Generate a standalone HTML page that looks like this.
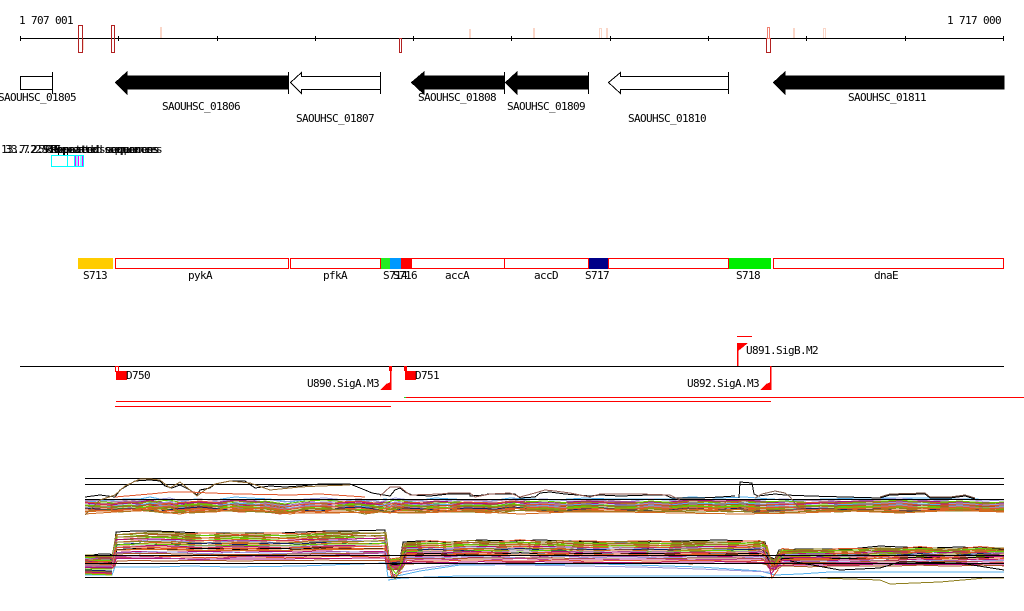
<!DOCTYPE html>
<html><head><meta charset="utf-8"><title>Genome browser</title>
<style>
html,body{margin:0;padding:0;background:#fff;width:1024px;height:611px;overflow:hidden}
svg{display:block}
text{font-family:"DejaVu Sans Mono","Liberation Mono",monospace;font-size:11px;letter-spacing:-.62px;fill:#000}
.p{fill:none;shape-rendering:crispEdges}
.c{shape-rendering:crispEdges}
</style></head><body>
<svg width="1024" height="611" viewBox="0 0 1024 611" xmlns="http://www.w3.org/2000/svg">
<defs>
<polyline id="u1" class="p" points="85,508 100,507 115,506 125,505 140,505 150,503 165,506 180,508 195,505 215,506 235,503 250,504 270,505 290,508 310,505 330,506 350,506 370,507 385,505 400,507 415,507 435,504 470,506 490,507 510,504 530,505 555,506 585,504 610,505 640,505 670,505 690,503 720,504 745,503 770,505 790,506 830,505 860,504 890,504 925,504 945,505 970,505 1004,506"/>
<polyline id="u2" class="p" points="85,506 105,505 120,507 135,506 150,505 170,503 190,508 210,507 230,505 245,507 265,504 285,507 305,504 325,503 345,505 365,509 380,507 395,503 410,505 430,507 455,505 480,506 500,508 520,505 545,504 570,506 600,506 625,507 650,504 680,506 705,505 730,507 760,505 785,504 815,506 840,507 870,505 900,503 930,506 960,504 985,506 1004,505"/>
<polyline id="u3" class="p" points="85,504 110,506 130,504 145,506 160,507 175,505 200,503 220,505 240,507 260,506 280,509 300,506 320,507 340,504 360,503 375,505 390,508 405,504 425,505 445,507 465,504 495,505 515,503 535,506 560,507 580,505 605,504 630,506 660,507 685,504 715,506 740,504 755,507 775,506 800,505 825,504 850,506 880,505 910,507 940,505 975,506 1004,507"/>
<polyline id="l1" class="p" vector-effect="non-scaling-stroke" points="85,-19 100,-21 110,-21 113,-19 116,-43 135,-44 155,-44 180,-43 200,-42 220,-42 240,-42 260,-42 280,-42 300,-43 330,-44 350,-44 385,-45 387,-20 392,-14 400,-15 403,-33 420,-34 450,-33 480,-35 510,-34 540,-35 570,-34 600,-33 640,-33 680,-34 720,-35 750,-34 765,-33 769,-18 775,-16 779,-25 800,-26 830,-26 850,-26 880,-29 900,-28 930,-27 960,-28 1004,-26"/>
<polyline id="l2" class="p" vector-effect="non-scaling-stroke" points="85,-18 100,-19 111,-20 114,-20 117,-41 140,-43 160,-41 180,-42 210,-43 240,-41 270,-43 300,-42 320,-44 350,-42 385,-43 388,-16 395,-17 402,-18 405,-32 430,-35 460,-33 490,-33 520,-36 550,-33 580,-35 610,-34 650,-35 690,-33 730,-34 760,-35 767,-30 771,-14 778,-18 782,-27 810,-24 840,-27 870,-27 890,-26 920,-29 950,-26 980,-29 1004,-27"/>
<polyline id="l3" class="p" vector-effect="non-scaling-stroke" points="85,-21 105,-20 112,-19 116,-42 130,-42 150,-45 175,-44 205,-41 235,-44 255,-43 285,-41 315,-43 345,-45 375,-43 386,-44 390,-12 398,-13 403,-20 407,-34 440,-33 470,-36 500,-34 530,-33 560,-36 590,-33 620,-35 660,-33 700,-35 740,-33 764,-35 768,-24 773,-12 780,-22 785,-26 820,-27 845,-25 875,-28 905,-26 935,-28 965,-26 990,-28 1004,-28"/>
</defs>

<!-- Ruler -->
<text x="19" y="24">1 707 001</text>
<text x="947" y="24">1 717 000</text>
<g stroke="#fad6c8" stroke-width="2" class="c" fill="none">
<path d="M161 27V38M83 38V50M470 29V38M534 28V38M794 28V38"/>
<rect x="599.5" y="28.5" width="2" height="10" stroke-width="1"/>
<path d="M607 28V38"/>
<rect x="823.5" y="28.5" width="2" height="10" stroke-width="1"/>
</g>
<path d="M20 38.5H1004M20.5 36V41M118.5 36V41M217.5 36V41M315.5 36V41M413.5 36V41M511.5 36V41M610.5 36V41M708.5 36V41M806.5 36V41M905.5 36V41M1003.5 36V41" stroke="#000" class="c" fill="none"/>
<g fill="none" stroke="#b22222" class="c">
<rect x="78.5" y="25.5" width="4" height="27"/>
<rect x="111.5" y="25.5" width="3" height="27"/>
<rect x="399.5" y="38.5" width="2" height="14"/>
<rect x="766.5" y="38.5" width="4" height="14"/>
<rect x="767.5" y="27.5" width="2" height="11" stroke="#f08070"/>
</g>

<!-- Genes -->
<g stroke="#000" stroke-width="1" class="c">
<path d="M52.500 72V94M52.500 76.500H20.500V89.500H52.500" fill="#fff"/>
<polygon points="115.500,82.500 127,72 127,76 288.500,76 288.500,89 127,89 127,94" fill="#000"/>
<path d="M288.500 72V94"/>
<polygon points="290.500,82.500 301.500,72.500 301.500,76.500 380.500,76.500 380.500,89.500 301.500,89.500 301.500,93.500" fill="#fff"/>
<path d="M380.500 72V94"/>
<polygon points="411.500,82.500 424,72 424,76 504.500,76 504.500,89 424,89 424,94" fill="#000"/>
<path d="M504.500 72V94"/>
<polygon points="505.500,82.500 517,72 517,76 588.500,76 588.500,89 517,89 517,94" fill="#000"/>
<path d="M588.500 72V94"/>
<polygon points="608.500,82.500 620.500,72.500 620.500,76.500 728.500,76.500 728.500,89.500 620.500,89.500 620.500,93.500" fill="#fff"/>
<path d="M728.500 72V94"/>
<polygon points="773.500,82.500 785,72 785,76 1004,76 1004,89 785,89 785,94" fill="#000"/>
</g>
<text x="-2" y="101">SAOUHSC_01805</text>
<text x="162" y="110">SAOUHSC_01806</text>
<text x="296" y="122">SAOUHSC_01807</text>
<text x="418" y="101">SAOUHSC_01808</text>
<text x="507" y="110">SAOUHSC_01809</text>
<text x="628" y="122">SAOUHSC_01810</text>
<text x="848" y="101">SAOUHSC_01811</text>

<!-- Repeats -->
<text x="51" y="153">Repeated sequences</text>
<text x="45" y="153">Repeated sequences</text>
<text x="38" y="153">5 Repeated sequences</text>
<text x="30" y="153">2.5 Repeated sequences</text>
<text x="1" y="153">13.7.2.9.5</text>
<text x="5" y="153">33.7 2 3</text>
<g class="c" fill="none" stroke="#00ffff">
<rect x="51.500" y="155.500" width="32" height="11"/>
<path d="M67.500 155V167M74.500 155V167M77 155V167M81 155V167"/>
<path d="M75.500 156V166M78.500 156V166M82.500 156V166" stroke="#ff00ff"/>
</g>

<!-- Segments -->
<g class="c">
<rect x="78" y="258" width="35" height="11" fill="#ffcc00"/>
<g fill="#fff" stroke="#ff0000">
<rect x="115.500" y="258.500" width="173" height="10"/>
<rect x="290.500" y="258.500" width="90" height="10"/>
<rect x="411.500" y="258.500" width="93" height="10"/>
<rect x="504.500" y="258.500" width="84" height="10"/>
<rect x="608.500" y="258.500" width="120" height="10"/>
<rect x="773.500" y="258.500" width="230" height="10"/>
</g>
<rect x="381" y="258" width="9" height="11" fill="#22ee22"/>
<rect x="390" y="258" width="11" height="11" fill="#0099ff"/>
<rect x="401" y="258" width="11" height="11" fill="#ff0000"/>
<rect x="589" y="258" width="19" height="11" fill="#000088"/>
<rect x="729" y="258" width="42" height="11" fill="#00ee00"/>
</g>
<text x="83" y="279">S713</text>
<text x="188" y="279">pykA</text>
<text x="323" y="279">pfkA</text>
<text x="383" y="279">S714</text>
<text x="393" y="279">S716</text>
<text x="445" y="279">accA</text>
<text x="534" y="279">accD</text>
<text x="585" y="279">S717</text>
<text x="736" y="279">S718</text>
<text x="874" y="279">dnaE</text>

<!-- Transcription -->
<path d="M20 366.500H1004" stroke="#000" class="c"/>
<g class="c" fill="#ff0000">
<rect x="115.500" y="366.500" width="3" height="5" fill="#fff" stroke="#ff0000"/>
<rect x="116" y="371" width="11" height="9"/>
<rect x="389" y="366" width="3" height="5"/>
<rect x="390" y="366" width="1.500" height="24"/>
<polygon points="380,390 391,390 391,382 386,384"/>
<rect x="404" y="366" width="3" height="5"/>
<rect x="405" y="371" width="11" height="9"/>
<rect x="737" y="336" width="15" height="1"/>
<rect x="737" y="343" width="1.500" height="23"/>
<polygon points="737,343 748,343 737,352"/>
<rect x="770" y="366" width="1.500" height="24"/>
<polygon points="760,390 771,390 771,382 766,384"/>
<rect x="405" y="397" width="619" height="1"/>
<rect x="116" y="401" width="655" height="1"/>
<rect x="115" y="406" width="276" height="1"/>
<rect x="404" y="397" width="2" height="1" fill="#22dd22"/>
</g>
<text x="126" y="379">D750</text>
<text x="415" y="379">D751</text>
<text x="307" y="387">U890.SigA.M3</text>
<text x="746" y="354">U891.SigB.M2</text>
<text x="687" y="387">U892.SigA.M3</text>

<!-- Expression upper -->
<g>
<use href="#u1" stroke="#55b0ee" y="-6"/>
<use href="#u2" stroke="#9999dd" y="-5"/>
<use href="#u3" stroke="#aa88aa" y="-4"/>
<use href="#u1" stroke="#b0107a" y="-3"/>
<use href="#u2" stroke="#66cc00" y="-3"/>
<use href="#u3" stroke="#e0562a" y="-2"/>
<use href="#u1" stroke="#8f7f1f" y="-2"/>
<use href="#u2" stroke="#9999dd" y="-1"/>
<use href="#u3" stroke="#b0107a" y="-1"/>
<use href="#u1" stroke="#55b0ee" y="0"/>
<use href="#u2" stroke="#e0562a" y="0"/>
<use href="#u3" stroke="#66cc00" y="1"/>
<use href="#u1" stroke="#aa5522" y="1"/>
<use href="#u2" stroke="#aa88aa" y="2"/>
<use href="#u3" stroke="#8f7f1f" y="2"/>
<use href="#u1" stroke="#66cc00" y="3"/>
<use href="#u2" stroke="#e0562a" y="3"/>
<use href="#u3" stroke="#112266" y="4"/>
<use href="#u1" stroke="#d2691e" y="4"/>
<use href="#u2" stroke="#8f7f1f" y="5"/>
<use href="#u3" stroke="#e0562a" y="5"/>
<use href="#u1" stroke="#d2691e" y="6"/>
</g>
<path d="M85 478.500H1004M85 484.500H1004M85 499.500H1004" stroke="#000" class="c" fill="none"/>
<polyline class="p" stroke="#000" points="85,497 100,495 115,497 120,490 135,481 150,480 160,481 165,486 172,488 180,485 190,490 197,495 200,490 210,488 215,484 230,481 245,481 255,488 270,486 285,487 300,486 320,484 350,484 365,490 372,493 390,496 395,490 400,488 405,492 412,495 430,496 440,495 448,494 470,494 470,496 485,495 488,494 515,494 520,498 535,497 540,493 550,492 565,494 590,496 600,495 620,496 650,495 665,495 672,498 700,498 720,497 735,496"/>
<polyline class="p" stroke="#000" points="739,498 740,482 752,483 754,494 758,496 775,494 785,495 810,496 880,498 890,495 925,494 930,498 950,498 965,496 975,499"/>
<polyline class="p" stroke="#8f6a30" points="85,515 100,500 115,495 125,486 140,479 150,479 160,480 170,488 180,482 190,490 197,496 205,490 215,484 230,481 250,483 270,490 300,487 320,486 350,485"/>
<polyline class="p" stroke="#8f5a50" points="380,496 390,487 400,487 410,495 440,494 450,493 470,493 475,497 490,494 510,493 520,497 535,493 545,490 555,491 570,493 590,497 600,494 640,494 670,495 680,500"/>
<polyline class="p" stroke="#e0562a" points="115,497 150,494 170,492 190,492 210,493 240,494 290,495 320,494 365,497"/>
<polyline class="p" stroke="#806050" points="755,498 762,494 775,491 785,493 790,497 800,509 755,513 740,509"/>
<polyline class="p" stroke="#6b4a3a" points="880,497 890,494 925,493 930,497 950,497 965,495 975,498"/>
<polyline class="p" stroke="#8f7f1f" points="140,510 165,513 190,512 215,511 240,511 260,512 280,513 310,509 350,510 380,511 400,513 420,512 470,512 500,511 540,510 590,512 640,511 700,512 725,511 775,513 830,510 900,512 950,511 1004,510"/>
<polyline class="p" stroke="#d2691e" points="85,511 115,511 130,511 150,509 160,512 180,514 190,512 215,512 230,510 265,511 300,513 330,513 370,512 420,513 470,511 520,514 570,512 620,512 680,513 740,514 800,513 850,511 900,513 960,510 1004,511"/>

<!-- Expression lower -->
<g>
<use href="#l1" stroke="#000" transform="translate(0,575)"/>
<use href="#l2" stroke="#e0562a" transform="translate(0,575) scale(1,.98)"/>
<use href="#l3" stroke="#8f7f1f" transform="translate(0,575) scale(1,.96)"/>
<use href="#l1" stroke="#8f7f1f" transform="translate(0,575) scale(1,.94)"/>
<use href="#l2" stroke="#66cc00" transform="translate(0,575) scale(1,.92)"/>
<use href="#l3" stroke="#aa5522" transform="translate(0,575) scale(1,.90)"/>
<use href="#l1" stroke="#8f7f1f" transform="translate(0,575) scale(1,.88)"/>
<use href="#l2" stroke="#d2691e" transform="translate(0,575) scale(1,.86)"/>
<use href="#l3" stroke="#66cc00" transform="translate(0,575) scale(1,.84)"/>
<use href="#l1" stroke="#b0107a" transform="translate(0,575) scale(1,.82)"/>
<use href="#l2" stroke="#e0562a" transform="translate(0,575) scale(1,.80)"/>
<use href="#l3" stroke="#9999dd" transform="translate(0,575) scale(1,.78)"/>
<use href="#l1" stroke="#8f7f1f" transform="translate(0,575) scale(1,.76)"/>
<use href="#l2" stroke="#112266" transform="translate(0,575) scale(1,.74)"/>
<use href="#l3" stroke="#d2691e" transform="translate(0,575) scale(1,.72)"/>
<use href="#l1" stroke="#66cc00" transform="translate(0,575) scale(1,.70)"/>
<use href="#l2" stroke="#aa88aa" transform="translate(0,575) scale(1,.68)"/>
<use href="#l3" stroke="#b0107a" transform="translate(0,575) scale(1,.66)"/>
<use href="#l1" stroke="#e0562a" transform="translate(0,575) scale(1,.64)"/>
<use href="#l2" stroke="#000" transform="translate(0,575) scale(1,.62)"/>
<use href="#l3" stroke="#e0562a" transform="translate(0,575) scale(1,.60)"/>
<use href="#l1" stroke="#d2691e" transform="translate(0,575) scale(1,.58)"/>
<use href="#l2" stroke="#b0107a" transform="translate(0,575) scale(1,.55)"/>
<use href="#l3" stroke="#9999dd" transform="translate(0,575) scale(1,.52)"/>
<use href="#l1" stroke="#aa5522" transform="translate(0,575) scale(1,.49)"/>
<use href="#l2" stroke="#c04090" transform="translate(0,575) scale(1,.46)"/>
<use href="#l3" stroke="#e0562a" transform="translate(0,575) scale(1,.42)"/>
<use href="#l1" stroke="#b0107a" transform="translate(0,575) scale(1,.38)"/>
<use href="#l2" stroke="#aa5522" transform="translate(0,575) scale(1,.34)"/>
</g>
<polyline class="p" stroke="#55b0ee" points="85,575 112,575 115,567 150,567 190,566 230,567 300,566 386,563 388,577 402,575 420,571 460,565 600,564 700,567 760,571 775,575 800,574 830,572 1004,572"/>
<polyline class="p" stroke="#55b0ee" points="388,580 402,578 460,576 760,576 770,578"/>
<polyline class="p" stroke="#9999dd" points="402,572 425,568 460,564 640,567 700,569 770,572"/>
<polyline class="p" stroke="#b0409a" points="115,557 150,557 200,560 240,557 300,556 386,553"/>
<polyline class="p" stroke="#000" points="790,561 840,570 880,568 900,562 960,563 1004,570"/>
<polyline class="p" stroke="#8f7f1f" points="820,578 880,580 890,584 940,582 985,578 1004,578"/>
<g class="p">
<polyline stroke="#e0562a" points="85,565 112,565"/>
<polyline stroke="#9999dd" points="85,566 112,566"/>
<polyline stroke="#b0107a" points="85,567 112,568"/>
<polyline stroke="#66cc00" points="85,569 112,569"/>
<polyline stroke="#112266" points="85,570 112,571"/>
<polyline stroke="#8f7f1f" points="85,571 112,572"/>
<polyline stroke="#b0107a" points="85,572 112,573"/>
<polyline stroke="#e0562a" points="85,573 112,574"/>
<polyline stroke="#66cc00" points="85,574 112,575"/>
<polyline stroke="#e0562a" points="387,558 392,578 402,572"/>
<polyline stroke="#b0107a" points="388,560 393,576 402,568"/>
<polyline stroke="#8f7f1f" points="389,564 395,579 403,566"/>
<polyline stroke="#66cc00" points="390,566 396,574 403,560"/>
<polyline stroke="#e0562a" points="768,560 772,578 778,570"/>
<polyline stroke="#b0107a" points="768,562 771,574 778,565"/>
</g>
<path d="M85 555.500H1004M85 563.500H1004M85 577.500H1004" stroke="#000" class="c" fill="none"/>
</svg>
</body></html>
